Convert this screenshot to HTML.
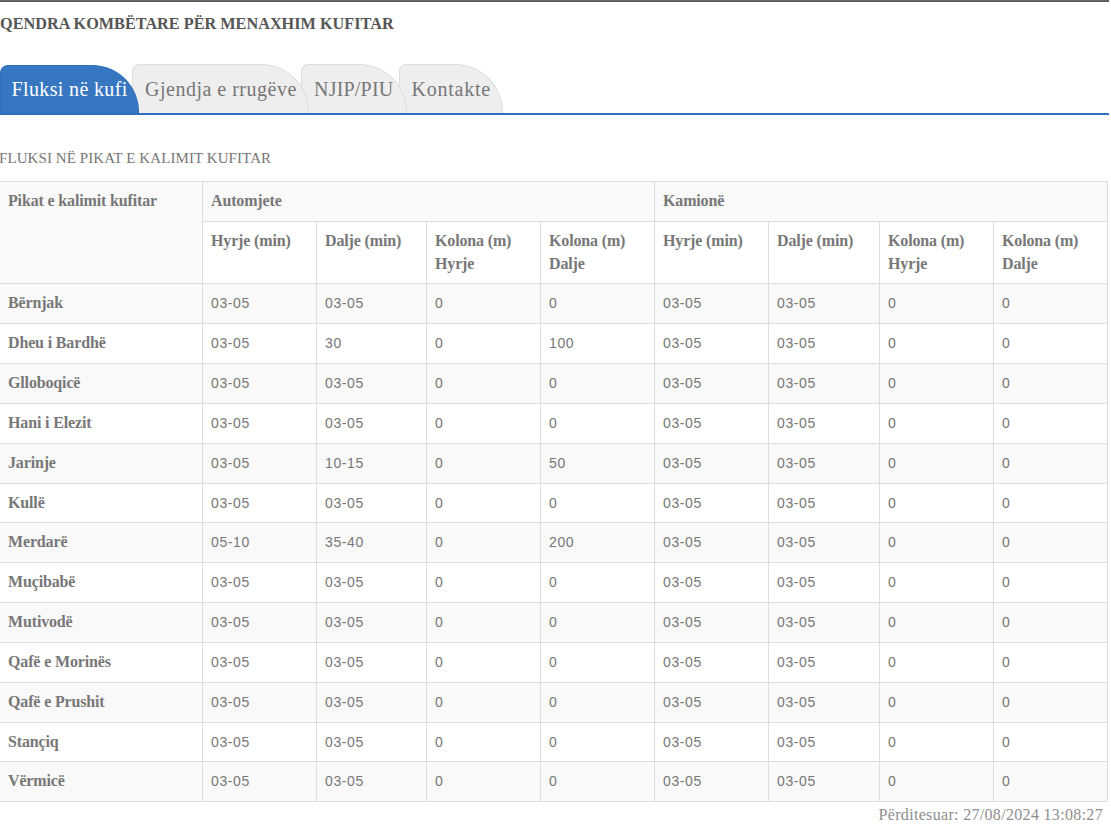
<!DOCTYPE html>
<html><head><meta charset="utf-8">
<style>
html,body{margin:0;padding:0;background:#fff;}
body{width:1111px;height:834px;overflow:hidden;position:relative;font-family:"Liberation Serif",serif;color:#777;}
#topbar{position:absolute;left:0;top:0;width:1109px;height:1px;background:#686868;border-bottom:1px solid #595959;}
#title{position:absolute;left:-0.5px;top:11px;font-size:17.7px;font-weight:bold;color:#555;white-space:nowrap;line-height:24px;transform:scaleX(0.918);transform-origin:0 0;}
#tabs{position:absolute;left:0;top:64px;width:1109px;height:51px;}
#tabline{position:absolute;left:0;top:113px;width:1109px;height:2px;background:#2e6ec0;}
.tab{position:absolute;top:0;height:49px;box-sizing:border-box;background:#eee;border:1px solid #ddd;border-bottom:none;border-radius:7px 48px 0 0 / 7px 48px 0 0;font-size:20px;color:#777;line-height:49px;padding-left:12px;white-space:nowrap;}
.tab.active{top:1px;height:48px;background:#3777c2;border-color:#2f6ebd;color:#fff;z-index:10;border-radius:8px 47px 0 0 / 8px 47px 0 0;line-height:47px;}
#heading{position:absolute;left:-1px;top:147px;font-size:15px;color:#777;white-space:nowrap;line-height:22px;letter-spacing:0.08px;}
table{position:absolute;left:-1px;top:181px;border-collapse:separate;border-spacing:0;table-layout:fixed;width:1109px;border-right:1px solid #ddd;border-bottom:1px solid #ddd;}
th,td{box-sizing:border-box;border-left:1px solid #ddd;border-top:1px solid #ddd;padding:8px 8px 0 8px;font-size:16px;line-height:22.857px;text-align:left;vertical-align:top;color:#777;}
th{font-weight:bold;color:#777;letter-spacing:-0.15px;}
td{font-weight:normal;font-family:"Liberation Sans",sans-serif;font-size:14px;letter-spacing:0.6px;}
tr.odd th, tr.odd td{background:#f9f9f9;}
tr.even th, tr.even td{background:#fff;}
#footer{position:absolute;right:8px;top:804.2px;font-size:16px;color:#8e8e8e;white-space:nowrap;line-height:22px;letter-spacing:0.32px;}
</style></head><body>
<div id="topbar"></div>
<div id="title">QENDRA KOMBËTARE PËR MENAXHIM KUFITAR</div>
<div id="tabs">
<div class="tab active" style="left:0;width:139px;letter-spacing:0.35px;padding-left:10.6px;">Fluksi në kufi</div>
<div class="tab" style="left:132px;width:177px;z-index:3;letter-spacing:0.5px;padding-left:12px;">Gjendja e rrugëve</div>
<div class="tab" style="left:301px;width:106px;z-index:2;letter-spacing:0.2px;padding-left:12px;">NJIP/PIU</div>
<div class="tab" style="left:399px;width:104px;z-index:1;letter-spacing:0.75px;padding-left:11.5px;">Kontakte</div>
</div>
<div id="tabline"></div>
<div id="heading">FLUKSI NË PIKAT E KALIMIT KUFITAR</div>
<table>
<colgroup><col style="width:203px"><col style="width:114px"><col style="width:110px"><col style="width:114px"><col style="width:114px"><col style="width:114px"><col style="width:111px"><col style="width:114px"><col style="width:114px"></colgroup>
<tr class="odd" style="height:40px"><th rowspan="2">Pikat e kalimit kufitar</th><th colspan="4">Automjete</th><th colspan="4">Kamionë</th></tr>
<tr class="even" style="height:62px"><th>Hyrje (min)</th><th>Dalje (min)</th><th>Kolona (m)<br>Hyrje</th><th>Kolona (m)<br>Dalje</th><th>Hyrje (min)</th><th>Dalje (min)</th><th>Kolona (m)<br>Hyrje</th><th>Kolona (m)<br>Dalje</th></tr>
<tr class="odd" style="height:40px"><th>Bërnjak</th><td>03-05</td><td>03-05</td><td>0</td><td>0</td><td>03-05</td><td>03-05</td><td>0</td><td>0</td></tr>
<tr class="even" style="height:40px"><th>Dheu i Bardhë</th><td>03-05</td><td>30</td><td>0</td><td>100</td><td>03-05</td><td>03-05</td><td>0</td><td>0</td></tr>
<tr class="odd" style="height:40px"><th>Glloboqicë</th><td>03-05</td><td>03-05</td><td>0</td><td>0</td><td>03-05</td><td>03-05</td><td>0</td><td>0</td></tr>
<tr class="even" style="height:40px"><th>Hani i Elezit</th><td>03-05</td><td>03-05</td><td>0</td><td>0</td><td>03-05</td><td>03-05</td><td>0</td><td>0</td></tr>
<tr class="odd" style="height:40px"><th>Jarinje</th><td>03-05</td><td>10-15</td><td>0</td><td>50</td><td>03-05</td><td>03-05</td><td>0</td><td>0</td></tr>
<tr class="even" style="height:39px"><th>Kullë</th><td>03-05</td><td>03-05</td><td>0</td><td>0</td><td>03-05</td><td>03-05</td><td>0</td><td>0</td></tr>
<tr class="odd" style="height:40px"><th>Merdarë</th><td>05-10</td><td>35-40</td><td>0</td><td>200</td><td>03-05</td><td>03-05</td><td>0</td><td>0</td></tr>
<tr class="even" style="height:40px"><th>Muçibabë</th><td>03-05</td><td>03-05</td><td>0</td><td>0</td><td>03-05</td><td>03-05</td><td>0</td><td>0</td></tr>
<tr class="odd" style="height:40px"><th>Mutivodë</th><td>03-05</td><td>03-05</td><td>0</td><td>0</td><td>03-05</td><td>03-05</td><td>0</td><td>0</td></tr>
<tr class="even" style="height:40px"><th>Qafë e Morinës</th><td>03-05</td><td>03-05</td><td>0</td><td>0</td><td>03-05</td><td>03-05</td><td>0</td><td>0</td></tr>
<tr class="odd" style="height:40px"><th>Qafë e Prushit</th><td>03-05</td><td>03-05</td><td>0</td><td>0</td><td>03-05</td><td>03-05</td><td>0</td><td>0</td></tr>
<tr class="even" style="height:39px"><th>Stançiq</th><td>03-05</td><td>03-05</td><td>0</td><td>0</td><td>03-05</td><td>03-05</td><td>0</td><td>0</td></tr>
<tr class="odd" style="height:40px"><th>Vërmicë</th><td>03-05</td><td>03-05</td><td>0</td><td>0</td><td>03-05</td><td>03-05</td><td>0</td><td>0</td></tr>
</table>
<div id="footer">Përditesuar: 27/08/2024 13:08:27</div>
</body></html>
